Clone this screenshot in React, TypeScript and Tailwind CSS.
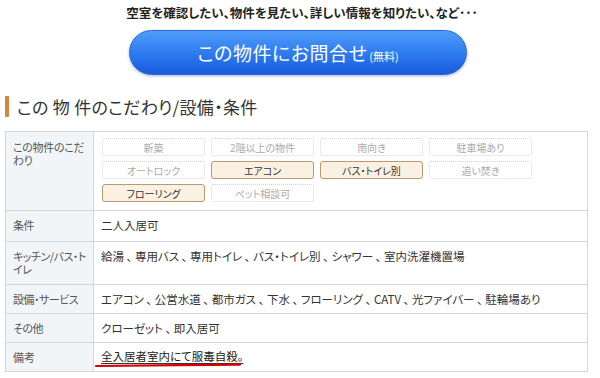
const tags: { label: string; on?: boolean }[] = [
  { label: "新築" },
  { label: "2階以上の物件" },
  { label: "南向き" },
  { label: "駐車場あり" },
  { label: "オートロック" },
  { label: "エアコン", on: true },
  { label: "バス・トイレ別", on: true },
  { label: "追い焚き" },
  { label: "フローリング", on: true },
  { label: "ペット相談可" },
];

const rows: { label: string; value: string; h: string }[] = [
  { label: "条件", value: "二人入居可", h: "h-[31px]" },
  {
    label: "キッチン/バス・トイレ",
    value: "給湯 、 専用バス 、 専用トイレ 、 バス・トイレ別 、 シャワー 、 室内洗濯機置場",
    h: "h-[43px]",
  },
  {
    label: "設備・サービス",
    value: "エアコン 、 公営水道 、 都市ガス 、 下水 、 フローリング 、 CATV 、 光ファイバー 、 駐輪場あり",
    h: "h-[29px]",
  },
  { label: "その他", value: "クローゼット 、 即入居可", h: "h-[29px]" },
];

export default function App() {
  return (
    <div className="w-[600px] h-[378px] overflow-hidden bg-white text-[#333] font-['Noto_Sans_CJK_JP','Noto_Sans',sans-serif] [font-feature-settings:'palt']">
      {/* lead text + contact button */}
      <p className="pt-[5px] pl-[4px] text-center text-[12.5px] leading-[16px] font-semibold text-[#222]">
        空室を確認したい、物件を見たい、詳しい情報を知りたい、など･･･
      </p>
      <button
        type="button"
        className="mt-[9px] ml-[129px] w-[338px] h-[45px] rounded-full border border-[#2b66d6] bg-gradient-to-b from-[#4f9cf8] via-[#2f7cf0] to-[#1a5bdc] shadow-[0_1px_3px_rgba(0,40,120,0.35)] flex items-end justify-center pb-[9px] text-white"
      >
        <span className="text-[19px] leading-[24px] tracking-[0.5px]">この物件にお問合せ</span>
        <span className="text-[11px] leading-[18px] ml-[2px]">(無料)</span>
      </button>

      {/* heading */}
      <div className="mt-[21px] ml-[5px] flex items-center h-[21px]">
        <div className="w-[4px] h-[21px] rounded-[1px] bg-[#d9843a]" />
        <h2 className="ml-[8px] text-[17px] leading-[21px] text-[#333] tracking-[0.3px]">
          この 物 件のこだわり/設備・条件
        </h2>
      </div>

      {/* table */}
      <div className="mt-[14px] ml-[5px] w-[583px] border border-[#d6d6d6] grid grid-cols-[88px_1fr]">
        <div className="h-[79px] bg-[#f1f5f8] border-r border-b border-[#d6d6d6] pl-[7px] pt-[9px] pr-[4px] text-[11px] leading-[13px] tracking-[-0.3px] text-[#555]">
          この物件のこだわり
        </div>
        <div className="h-[79px] border-b border-[#d6d6d6] pl-[8px] pt-[6px]">
          <div className="grid grid-cols-[103px_103px_103px_103px] gap-x-[6px] gap-y-[5px]">
            {tags.map((t) => (
              <div
                key={t.label}
                className={
                  t.on
                    ? "h-[18px] rounded-[3px] border border-[#b9996d] bg-[#fbf1e2] flex items-center justify-center text-[10px] text-[#333]"
                    : "h-[18px] rounded-[2px] border border-dotted border-[#d4d4d4] bg-white flex items-center justify-center text-[10px] text-[#aaa]"
                }
              >
                {t.label}
              </div>
            ))}
          </div>
        </div>

        {rows.map((r) => (
          <div key={r.label} className="contents">
            <div className={`${r.h} bg-[#f1f5f8] border-r border-b border-[#d6d6d6] pl-[7px] pr-[2px] pt-[8px] text-[11px] leading-[13px] tracking-[-0.5px] text-[#555]`}>
              {r.label}
            </div>
            <div className={`${r.h} border-b border-[#d6d6d6] pl-[7px] pt-[7px] text-[11.5px] leading-[15px] text-[#333]`}>
              {r.value}
            </div>
          </div>
        ))}

        <div className="h-[28px] bg-[#f1f5f8] border-r border-[#d6d6d6] pl-[7px] pt-[8px] text-[11px] leading-[13px] text-[#555]">
          備考
        </div>
        <div className="relative h-[28px] pl-[7px] pt-[6px] text-[11.5px] leading-[15px] text-[#222]">
          <span className="underline underline-offset-[2px] decoration-[#333]">全入居者室内にて服毒自殺。</span>
          <svg className="absolute left-[1px] top-[20px]" width="150" height="5" viewBox="0 0 150 5">
            <path d="M1 3 C 40 2.2, 100 2.4, 145 1.6" stroke="#d40000" strokeWidth="2.2" fill="none" strokeLinecap="round" />
          </svg>
        </div>
      </div>
    </div>
  );
}
